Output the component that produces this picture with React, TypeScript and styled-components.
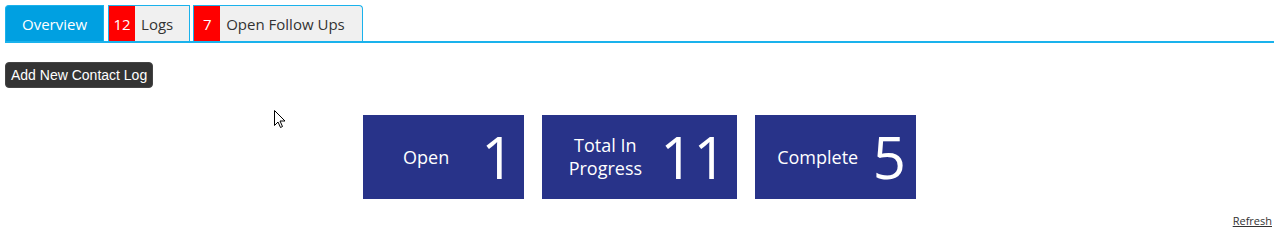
import styled, { createGlobalStyle } from 'styled-components';

const GlobalStyle = createGlobalStyle`
    body {
        margin: 0;
        background: #ffffff;
        font-family: "Open Sans", "Liberation Sans", sans-serif;
        color: #333333;
    }
`;

const Page = styled.div`
    position: relative;
    padding: 5px 8px 0 5px;
`;

const TabBar = styled.ul`
    display: flex;
    gap: 3px;
    margin: 0;
    padding: 0;
    list-style: none;
    border-bottom: 2px solid #1ab2ec;
`;

const Tab = styled.li<{ active?: boolean; first?: boolean; last?: boolean }>`
    display: flex;
    align-items: stretch;
    height: 36px;
    margin-right: ${(p) => (p.first ? '1px' : '0')};
    box-sizing: border-box;
    border: 1px solid #1ab2ec;
    border-bottom: 0;
    border-radius: ${(p) => (p.first ? '4px 0 0 0' : p.last ? '0 4px 0 0' : '0')};
    background: ${(p) => (p.active ? '#00a0e1' : '#f0f0f0')};
    color: ${(p) => (p.active ? '#ffffff' : '#333333')};
    font-size: 15px;
    cursor: pointer;
`;

const TabLabel = styled.span<{ pad: string }>`
    display: flex;
    align-items: center;
    padding: ${(p) => p.pad};
`;

const Badge = styled.span<{ w: number }>`
    display: flex;
    align-items: center;
    justify-content: center;
    width: ${(p) => p.w}px;
    background: #ff0000;
    color: #ffffff;
    font-size: 15px;
`;

const AddButton = styled.button`
    display: block;
    margin-top: 19px;
    height: 26px;
    padding: 0 5px;
    background: #333333;
    border: 1px solid #444444;
    border-radius: 4px;
    color: #ffffff;
    font-family: "Liberation Sans", Arial, sans-serif;
    font-size: 14px;
    cursor: pointer;
`;

const Cards = styled.div`
    display: flex;
    justify-content: center;
    gap: 18px;
    margin-top: 27px;
`;

const Card = styled.div`
    display: flex;
    align-items: center;
    height: 84px;
    padding: 0 10px 0 8px;
    background: #283389;
    color: #ffffff;
`;

const CardLabel = styled.div`
    width: 110px;
    text-align: center;
    font-size: 18px;
    line-height: 23px;
`;

const CardNumber = styled.div`
    font-size: 58px;
    font-weight: 400;
    line-height: 1;
`;

const RefreshRow = styled.div`
    text-align: right;
    padding: 9px 2px 0 0;
`;

const RefreshLink = styled.a`
    font-size: 11px;
    color: #333333;
    text-decoration: underline;
    cursor: pointer;
`;

const Cursor = styled.svg`
    position: absolute;
    left: 274px;
    top: 110px;
`;

const StatCard = ({ label, value }: { label: React.ReactNode; value: number }) => (
    <Card>
        <CardLabel>{label}</CardLabel>
        <CardNumber>{value}</CardNumber>
    </Card>
);

const App = () => {
    return (
        <>
            <GlobalStyle />
            <Page>
                <TabBar>
                    <Tab active first>
                        <TabLabel pad="0 16px 0 16px">Overview</TabLabel>
                    </Tab>
                    <Tab>
                        <Badge w={26}>12</Badge>
                        <TabLabel pad="0 16px 0 6px">Logs</TabLabel>
                    </Tab>
                    <Tab last>
                        <Badge w={26}>7</Badge>
                        <TabLabel pad="0 17px 0 6px">Open Follow Ups</TabLabel>
                    </Tab>
                </TabBar>
                <AddButton>Add New Contact Log</AddButton>
                <Cards>
                    <StatCard label="Open" value={1} />
                    <StatCard label={<>Total In<br />Progress</>} value={11} />
                    <StatCard label="Complete" value={5} />
                </Cards>
                <RefreshRow>
                    <RefreshLink>Refresh</RefreshLink>
                </RefreshRow>
                <Cursor width="12" height="19" viewBox="0 0 12 19">
                    <path d="M0.5 0.5 L0.5 15.5 L4 12 L6.5 17.5 L8.5 16.5 L6 11 L11 11 Z" fill="#ffffff" stroke="#000000" strokeWidth="1" />
                </Cursor>
            </Page>
        </>
    );
};

export default App;
